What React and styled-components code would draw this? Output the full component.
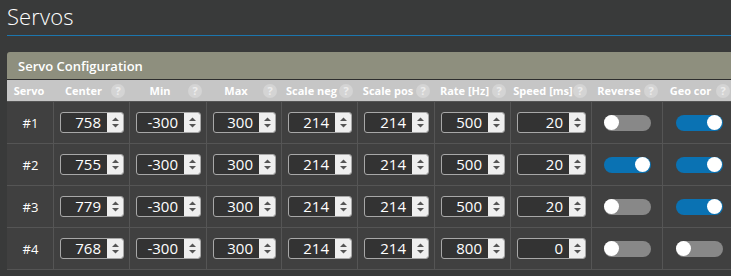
import React from 'react';
import styled, { createGlobalStyle, css } from 'styled-components';

const GlobalStyle = createGlobalStyle`
  html, body {
    margin: 0;
    padding: 0;
    background: #393a3a;
    overflow: hidden;
  }
  body {
    font-family: 'Open Sans', 'Liberation Sans', sans-serif;
    color: #fff;
  }
`;

const columns = [
  { label: 'Servo', width: 47, help: false },
  { label: 'Center', width: 76, help: true },
  { label: 'Min', width: 77, help: true },
  { label: 'Max', width: 75, help: true },
  { label: 'Scale neg', width: 76, help: true },
  { label: 'Scale pos', width: 77, help: true },
  { label: 'Rate [Hz]', width: 76, help: true },
  { label: 'Speed [ms]', width: 81, help: true },
  { label: 'Reverse', width: 71, help: true },
  { label: 'Geo cor', width: 72, help: true },
];

const servos = [
  { id: 1, values: [758, -300, 300, 214, 214, 500, 20], reverse: false, geo: true },
  { id: 2, values: [755, -300, 300, 214, 214, 500, 20], reverse: true, geo: true },
  { id: 3, values: [779, -300, 300, 214, 214, 500, 20], reverse: false, geo: true },
  { id: 4, values: [768, -300, 300, 214, 214, 800, 0], reverse: false, geo: false },
];

const gridCols = columns.map(c => `${c.width}px`).join(' ');

const Page = styled.div`
  padding: 1px 0 0 7px;
`;

const Title = styled.h1`
  margin: 0;
  font-size: 22px;
  font-weight: 300;
  line-height: 30px;
  padding-bottom: 4px;
  border-bottom: 1px solid #1c76ae;
  letter-spacing: 0.1px;
`;

const Panel = styled.div`
  margin-top: 16px;
  width: max-content;
  background: #404040;
  border-radius: 3px 3px 0 0;
  border-bottom: 1px solid #545454;
  overflow: hidden;
`;

const PanelHeader = styled.div`
  height: 27px;
  display: flex;
  align-items: center;
  padding-left: 11px;
  background: #8e8f7e;
  border-bottom: 1px solid #2e2e2e;
  font-size: 13px;
  font-weight: 600;
`;

const Row = styled.div`
  display: grid;
  grid-template-columns: ${gridCols};
  ${({ $head }) =>
    $head
      ? css`
          height: 21px;
          background: #c6c6c6;
        `
      : css`
          height: 42px;
          border-top: 1px solid #555;
          box-sizing: border-box;
        `}
`;

const HeadCell = styled.div`
  display: flex;
  align-items: center;
  padding: 0 5px 0 2px;
  font-size: 11px;
  font-weight: 700;
  white-space: nowrap;
`;

const HeadLabel = styled.span`
  flex: 1;
  text-align: center;
`;

const Help = styled.span`
  width: 14px;
  height: 14px;
  border-radius: 50%;
  background: #d4d4d4;
  color: #ececec;
  font-size: 11px;
  font-weight: 700;
  line-height: 14px;
  text-align: center;
  flex: none;
`;

const Cell = styled.div`
  box-sizing: border-box;
  display: flex;
  align-items: center;
  justify-content: center;
  padding: 0 5px 0 6px;
  border-right: 1px solid #555;
  font-size: 13px;
`;

const NumberBox = styled.div`
  display: flex;
  width: 100%;
  height: 21px;
  box-sizing: border-box;
  border: 1px solid #a8a8a8;
  border-radius: 3px;
  background: #333;
  overflow: hidden;
`;

const NumberValue = styled.span`
  flex: 1;
  text-align: right;
  padding-right: 6px;
  font-size: 15px;
  line-height: 19px;
`;

const Spinner = styled.span`
  width: 16px;
  flex: none;
  background: #efefef;
  display: flex;
  align-items: center;
  justify-content: center;
`;

const Toggle = styled.span`
  position: relative;
  width: 47px;
  height: 16px;
  border-radius: 8px;
  background: ${({ $on }) => ($on ? '#0a72b3' : '#888')};

  &::after {
    content: '';
    position: absolute;
    top: 0.5px;
    ${({ $on }) => ($on ? 'right: 1px;' : 'left: 0;')}
    width: 15px;
    height: 15px;
    border-radius: 50%;
    background: #fff;
  }
`;

const Arrows = () => (
  <svg width="9" height="13" viewBox="0 0 9 13">
    <path d="M4.5 1.5 L8 5 H1 Z" fill="#555" />
    <path d="M4.5 11.5 L8 8 H1 Z" fill="#555" />
  </svg>
);

const NumberInput = ({ value }) => (
  <NumberBox>
    <NumberValue>{value}</NumberValue>
    <Spinner>
      <Arrows />
    </Spinner>
  </NumberBox>
);

export default function App() {
  return (
    <>
      <GlobalStyle />
      <Page>
        <Title>Servos</Title>
        <Panel>
          <PanelHeader>Servo Configuration</PanelHeader>
          <Row $head>
            {columns.map(c => (
              <HeadCell key={c.label}>
                <HeadLabel>{c.label}</HeadLabel>
                {c.help && <Help>?</Help>}
              </HeadCell>
            ))}
          </Row>
          {servos.map(s => (
            <Row key={s.id}>
              <Cell>#{s.id}</Cell>
              {s.values.map((v, i) => (
                <Cell key={i}>
                  <NumberInput value={v} />
                </Cell>
              ))}
              <Cell>
                <Toggle $on={s.reverse} />
              </Cell>
              <Cell>
                <Toggle $on={s.geo} />
              </Cell>
            </Row>
          ))}
        </Panel>
      </Page>
    </>
  );
}
